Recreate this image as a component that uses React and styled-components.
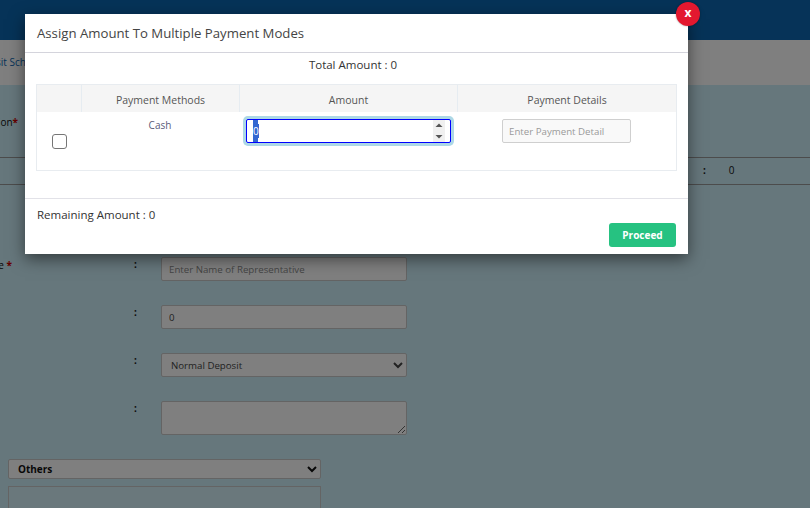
import React, { useEffect, useRef } from "react";
import styled, { createGlobalStyle } from "styled-components";

const Global = createGlobalStyle`
  html, body { margin: 0; padding: 0; height: 100%; overflow: hidden; background: #cceef8; }
  * { box-sizing: border-box; }
  body { font-family: "Open Sans", "Liberation Sans", sans-serif; }
  #root { position: relative; height: 508px; overflow: hidden; }
  input::selection { background: #3367d1; color: #fff; }
`;

const Page = styled.div`
  height: 508px;
  overflow: hidden;
  background: #cceef8;
  color: #111;
`;
const TopBar = styled.header`
  height: 40px;
  background: #0c66b0;
`;
const SubNav = styled.nav`
  height: 45px;
  background: #fff;
  padding-top: 14px;
  font-size: 10px;
  line-height: 16px;
  color: #0c66b0;
  margin-left: -29px;
  width: 839px;
`;
const TopRow = styled.div`
  height: 72px;
  display: flex;
  justify-content: flex-end;
  width: 18px;
  padding-top: 29px;
  font-size: 10px;
  line-height: 16px;
  font-weight: 500;
  white-space: nowrap;
`;
const Star = styled.span`
  color: #c00;
  font-weight: 700;
`;
const StatRow = styled.div`
  height: 28px;
  border-top: 1px solid #999;
  border-bottom: 1px solid #999;
  display: flex;
  align-items: center;
  padding: 0 0 2px 703px;
  font-size: 10px;
  font-weight: 700;
`;
const StatValue = styled.span`
  margin-left: 23px;
  font-weight: 500;
`;
const Form = styled.div`
  padding-top: 72px;
  display: flex;
  flex-direction: column;
  gap: 24px;
`;
const Row = styled.div`
  display: grid;
  grid-template-columns: 12px 122px 27px 246px;
  font-size: 10px;
  line-height: 16px;
`;
const Label = styled.div`
  display: flex;
  justify-content: flex-end;
  white-space: nowrap;
  font-weight: 500;
`;
const Colon = styled.div`
  font-weight: 700;
  margin-top: -1px;
`;
const fieldCss = `
  width: 100%;
  border: 1px solid #c8c8c8;
  border-radius: 2px;
  background: #fff;
  font-family: inherit;
  font-size: 9.7px;
  color: #444;
  display: block;
  outline: none;
`;
const TextField = styled.input`
  ${fieldCss}
  height: 24px;
  padding: 0 7px;
  &::placeholder { color: #8a8a8a; opacity: 1; }
`;
const SelectField = styled.select`
  ${fieldCss}
  height: 24px;
  padding: 0 5px;
`;
const AreaField = styled.textarea`
  ${fieldCss}
  height: 34px;
  margin: 0;
`;
const Bottom = styled.div`
  margin: 24px 0 0 8px;
  width: 313px;
  display: flex;
  flex-direction: column;
  gap: 7px;
`;
const BottomSelect = styled.select`
  ${fieldCss}
  height: 20px;
  padding: 0 5px;
  font-size: 10px;
  font-weight: 700;
  color: #111;
`;
const BottomBox = styled.div`
  height: 60px;
  border: 1px solid #c8c8c8;
  background: #d4f0f8;
`;

const Backdrop = styled.div`
  position: absolute;
  inset: 0;
  background: rgba(0, 0, 0, 0.5);
`;
const Modal = styled.div`
  position: absolute;
  left: 25px;
  top: 14px;
  width: 663px;
  height: 240px;
  background: #fff;
  box-shadow: 0 5px 15px rgba(0, 0, 0, 0.5);
  color: #333;
`;
const Close = styled.button`
  position: absolute;
  right: -12px;
  top: -12px;
  width: 24px;
  height: 24px;
  padding: 0 0 2px;
  border: none;
  border-radius: 50%;
  background: #e3182f;
  color: #fff;
  font-family: inherit;
  font-size: 12px;
  font-weight: 700;
  line-height: 1;
  box-shadow: 0 0 2px rgba(0, 0, 0, 0.4);
`;
const ModalHead = styled.div`
  height: 39px;
  border-bottom: 1px solid #d4d4dc;
  padding: 10px 12px 0;
  font-size: 13.2px;
  line-height: 18px;
  color: #444;
`;
const Total = styled.div`
  height: 31px;
  padding: 3px 7px 0 0;
  text-align: center;
  font-size: 11.5px;
  line-height: 18px;
  color: #333;
`;
const Table = styled.div`
  margin: 0 11px;
  height: 87px;
  border: 1px solid #e8ecf0;
`;
const Columns = styled.div`
  display: grid;
  grid-template-columns: 44px 158px 218px 1fr;
`;
const HeadCell = styled.div`
  height: 27px;
  background: #f5f5f5;
  border-left: ${(p) => (p.$first ? "none" : "1px solid #e6ecf1")};
  text-align: center;
  font-size: 10.5px;
  line-height: 30px;
  color: #555;
`;
const CheckCell = styled.div`
  padding: 22px 0 0 15px;
`;
const Check = styled.input`
  appearance: none;
  display: block;
  margin: 0;
  width: 15px;
  height: 15px;
  border: 1.5px solid #767676;
  border-radius: 3px;
  background: #fff;
`;
const MethodCell = styled.div`
  padding-top: 5px;
  text-align: center;
  font-size: 10px;
  line-height: 16px;
  color: #5a5a7a;
`;
const AmountCell = styled.div`
  padding: 7px 6px 0 7px;
`;
const AmountBox = styled.div`
  position: relative;
  width: 205px;
  height: 24px;
`;
const AmountInput = styled.input`
  display: block;
  width: 100%;
  height: 24px;
  padding: 0 6px;
  border: 1px solid #00f;
  border-radius: 2px;
  outline: none;
  box-shadow: 0 0 0 3px #add8e6;
  font-family: inherit;
  font-size: 10px;
  color: #333;
  background: linear-gradient(#3367d1, #3367d1) 6px 0 / 5px 100% no-repeat, #fff;
  appearance: textfield;
  &::-webkit-inner-spin-button { display: none; }
`;
const Spinner = styled.svg`
  position: absolute;
  right: 6px;
  top: 1px;
  width: 12px;
  height: 22px;
  background: #f0f0f0;
  fill: #555;
`;
const DetailCell = styled.div`
  padding: 7px 0 0 45px;
`;
const DetailInput = styled.input`
  display: block;
  width: 129px;
  height: 24px;
  padding: 0 6px;
  border: 1px solid #cfcfcf;
  border-radius: 2px;
  background: #f9f9f9;
  font-family: inherit;
  font-size: 9.7px;
  &::placeholder { color: #9a9a9a; opacity: 1; }
`;
const Footer = styled.div`
  margin-top: 27px;
  border-top: 1px solid #e2e2e8;
  padding: 8px 12px 0;
`;
const Remaining = styled.div`
  font-size: 11.5px;
  line-height: 16px;
  color: #333;
`;
const Actions = styled.div`
  display: flex;
  justify-content: flex-end;
`;
const Proceed = styled.button`
  width: 67px;
  height: 24px;
  padding: 0 0 1px;
  border: none;
  border-radius: 3px;
  background: #26c281;
  color: #fff;
  font-family: inherit;
  font-size: 10px;
  font-weight: 700;
`;

export default function App() {
  const amount = useRef(null);
  useEffect(() => {
    amount.current.focus();
    amount.current.select();
  }, []);
  return (
    <>
      <Global />
      <Page>
        <TopBar />
        <SubNav>Deposit Scheme</SubNav>
        <TopRow>
          <span>Transaction<Star>*</Star></span>
        </TopRow>
        <StatRow>
          <span>:</span>
          <StatValue>0</StatValue>
        </StatRow>
        <Form>
          <Row>
            <Label><span>Name of Representative <Star>*</Star></span></Label>
            <span />
            <Colon>:</Colon>
            <TextField placeholder="Enter Name of Representative" />
          </Row>
          <Row>
            <span />
            <span />
            <Colon>:</Colon>
            <TextField defaultValue="0" />
          </Row>
          <Row>
            <span />
            <span />
            <Colon>:</Colon>
            <SelectField defaultValue="Normal Deposit">
              <option>Normal Deposit</option>
            </SelectField>
          </Row>
          <Row>
            <span />
            <span />
            <Colon>:</Colon>
            <AreaField />
          </Row>
        </Form>
        <Bottom>
          <BottomSelect defaultValue="Others">
            <option>Others</option>
          </BottomSelect>
          <BottomBox />
        </Bottom>
      </Page>
      <Backdrop />
      <Modal>
        <Close>x</Close>
        <ModalHead>Assign Amount To Multiple Payment Modes</ModalHead>
        <Total>Total Amount : 0</Total>
        <Table>
          <Columns>
            <HeadCell $first />
            <HeadCell>Payment Methods</HeadCell>
            <HeadCell>Amount</HeadCell>
            <HeadCell>Payment Details</HeadCell>
            <CheckCell><Check type="checkbox" /></CheckCell>
            <MethodCell>Cash</MethodCell>
            <AmountCell>
              <AmountBox>
                <AmountInput ref={amount} type="number" defaultValue="0" />
                <Spinner viewBox="0 0 12 22">
                  <path d="M6 3.5 9.5 7h-7z" />
                  <path d="M2.5 15h7L6 18.5z" />
                </Spinner>
              </AmountBox>
            </AmountCell>
            <DetailCell><DetailInput placeholder="Enter Payment Detail" /></DetailCell>
          </Columns>
        </Table>
        <Footer>
          <Remaining>Remaining Amount : 0</Remaining>
          <Actions><Proceed>Proceed</Proceed></Actions>
        </Footer>
      </Modal>
    </>
  );
}
